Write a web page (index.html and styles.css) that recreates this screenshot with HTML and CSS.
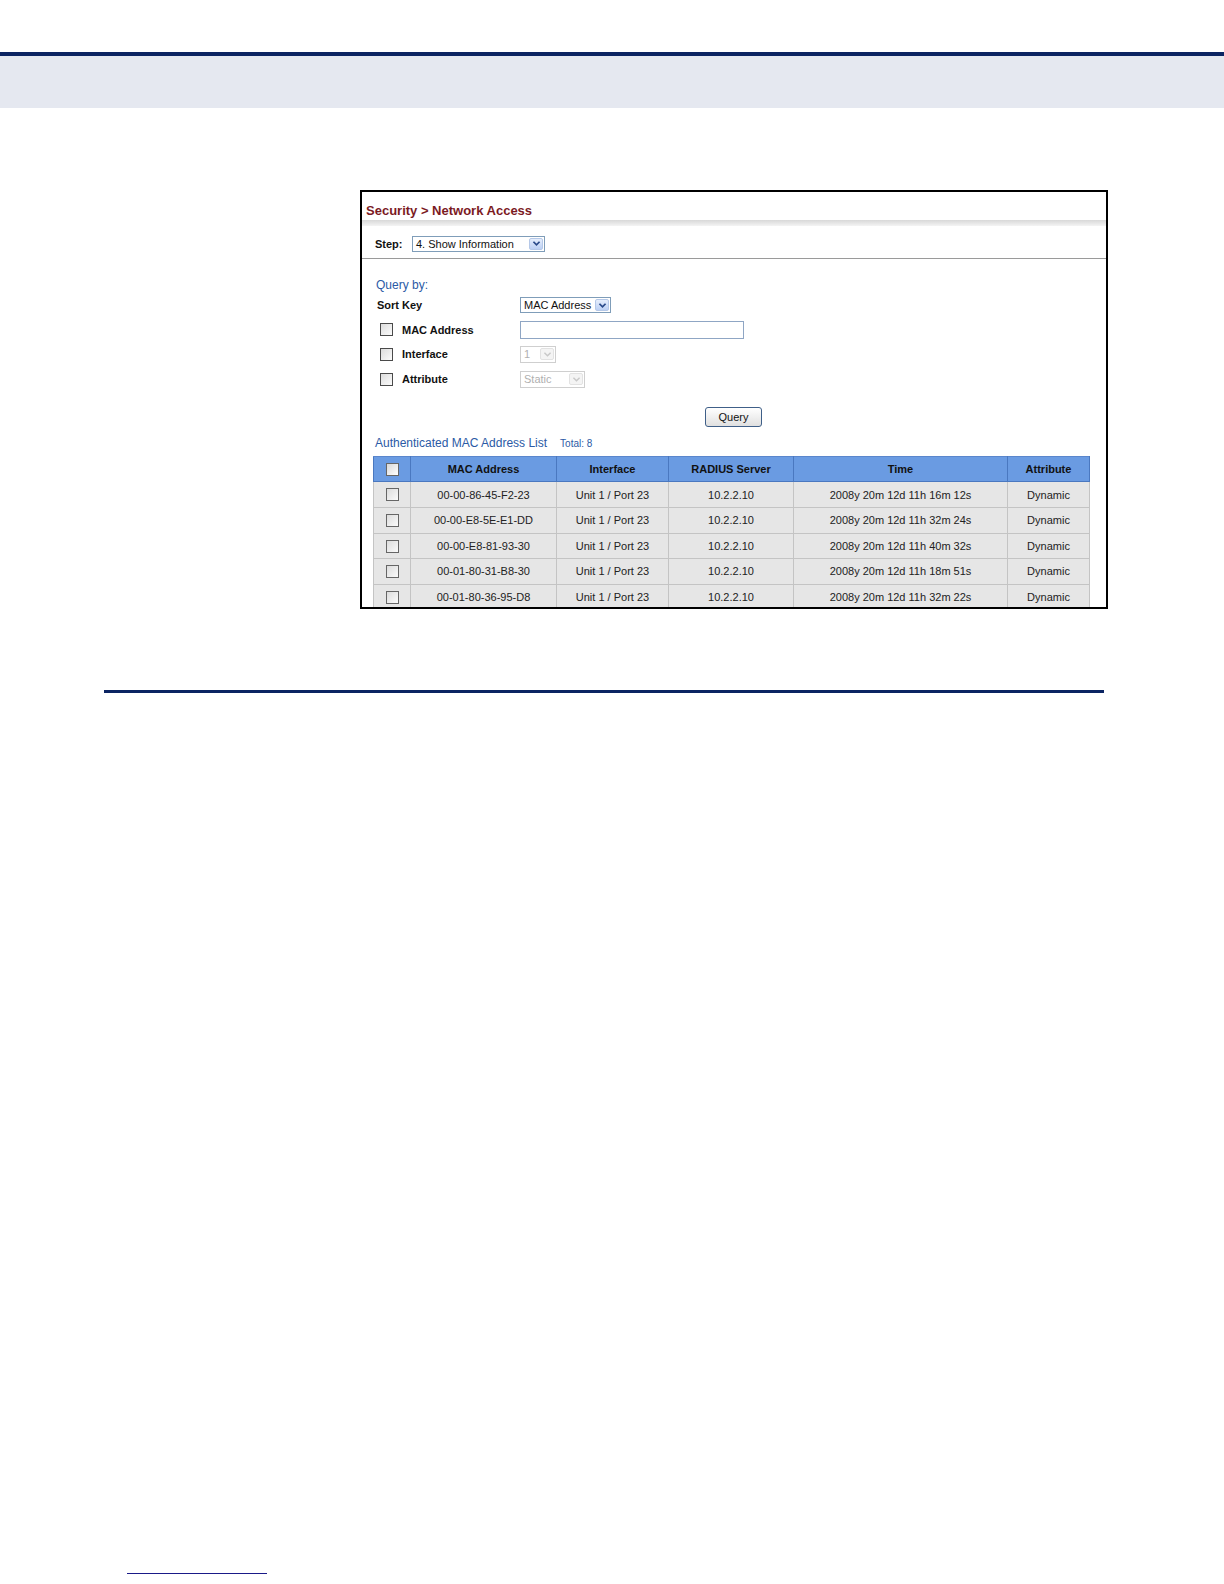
FILE: index.html
```html
<!DOCTYPE html>
<html>
<head>
<meta charset="utf-8">
<link rel="stylesheet" href="styles.css">
</head>
<body>
<div class="topspace"></div>
<div class="topline"></div>
<div class="topband"></div>

<div class="shot">
  <div class="title">Security &gt; Network Access</div>
  <div class="titleshade"></div>
  <div class="steprow">
    <span class="lbl">Step:</span>
    <span class="sel sel-step"><span class="seltext">4. Show Information</span><span class="arrow"><svg viewBox="0 0 10 8" width="9" height="7"><path d="M1.5 2 L5 5.5 L8.5 2" fill="none" stroke="#2a4a8a" stroke-width="2"/></svg></span></span>
  </div>
  <div class="steprule"></div>

  <div class="query">
    <div class="qtitle">Query by:</div>
    <div class="frow">
      <span class="flabel nocb">Sort Key</span>
      <span class="sel sel-sort"><span class="seltext">MAC Address</span><span class="arrow"><svg viewBox="0 0 10 8" width="9" height="7"><path d="M1.5 2 L5 5.5 L8.5 2" fill="none" stroke="#2a4a8a" stroke-width="2"/></svg></span></span>
    </div>
    <div class="frow">
      <span class="flabel"><span class="cb"></span>MAC Address</span>
      <span class="textin"></span>
    </div>
    <div class="frow">
      <span class="flabel"><span class="cb"></span>Interface</span>
      <span class="sel dis sel-if"><span class="seltext">1</span><span class="arrow"><svg viewBox="0 0 10 8" width="9" height="7"><path d="M1.5 2 L5 5.5 L8.5 2" fill="none" stroke="#c8c8c8" stroke-width="1.6"/></svg></span></span>
    </div>
    <div class="frow">
      <span class="flabel"><span class="cb"></span>Attribute</span>
      <span class="sel dis sel-attr"><span class="seltext">Static</span><span class="arrow"><svg viewBox="0 0 10 8" width="9" height="7"><path d="M1.5 2 L5 5.5 L8.5 2" fill="none" stroke="#c8c8c8" stroke-width="1.6"/></svg></span></span>
    </div>
    <div class="btnrow"><span class="btn">Query</span></div>
  </div>

  <div class="listhead"><span class="ltitle">Authenticated MAC Address List</span><span class="total">Total: 8</span></div>

  <table class="grid">
    <colgroup>
      <col class="c0"><col class="c1"><col class="c2"><col class="c3"><col class="c4"><col class="c5">
    </colgroup>
    <thead>
      <tr><th><span class="cb cbh"></span></th><th>MAC Address</th><th>Interface</th><th>RADIUS Server</th><th>Time</th><th>Attribute</th></tr>
    </thead>
    <tbody>
      <tr><td><span class="cb"></span></td><td>00-00-86-45-F2-23</td><td>Unit 1 / Port 23</td><td>10.2.2.10</td><td>2008y 20m 12d 11h 16m 12s</td><td>Dynamic</td></tr>
      <tr><td><span class="cb"></span></td><td>00-00-E8-5E-E1-DD</td><td>Unit 1 / Port 23</td><td>10.2.2.10</td><td>2008y 20m 12d 11h 32m 24s</td><td>Dynamic</td></tr>
      <tr><td><span class="cb"></span></td><td>00-00-E8-81-93-30</td><td>Unit 1 / Port 23</td><td>10.2.2.10</td><td>2008y 20m 12d 11h 40m 32s</td><td>Dynamic</td></tr>
      <tr><td><span class="cb"></span></td><td>00-01-80-31-B8-30</td><td>Unit 1 / Port 23</td><td>10.2.2.10</td><td>2008y 20m 12d 11h 18m 51s</td><td>Dynamic</td></tr>
      <tr><td><span class="cb"></span></td><td>00-01-80-36-95-D8</td><td>Unit 1 / Port 23</td><td>10.2.2.10</td><td>2008y 20m 12d 11h 32m 22s</td><td>Dynamic</td></tr>
    </tbody>
  </table>
</div>

<div class="rule"></div>
<div class="spacer"></div>
<div class="footline"></div>
</body>
</html>
```

FILE: styles.css
```css
html, body {
  margin: 0;
  padding: 0;
  background: #ffffff;
  font-family: "Liberation Sans", Arial, sans-serif;
}
.topspace { height: 52px; }
.topline { height: 4px; background: #0b2462; }
.topband { height: 52px; background: #e5e8f0; }

.shot {
  margin: 82px 0 0 360px;
  width: 744px;
  height: 415px;
  border: 2px solid #000;
  overflow: hidden;
  background: #fff;
  position: relative;
}
.title {
  padding: 11px 0 0 4px;
  height: 17px;
  font-size: 13px;
  font-weight: bold;
  color: #7b1a1f;
  line-height: 16px;
}
.titleshade {
  height: 6px;
  background: linear-gradient(#d8d8d8, #f4f4f4);
}
.steprow {
  display: flex;
  align-items: center;
  height: 21px;
  margin-top: 7px;
  padding-left: 13px;
}
.lbl {
  font-size: 11px;
  font-weight: bold;
  color: #111;
  width: 37px;
}
.sel {
  display: inline-flex;
  align-items: center;
  box-sizing: border-box;
  border: 1px solid #7f9db9;
  background: #fff;
  font-size: 11px;
  color: #111;
  height: 16px;
}
.seltext { flex: 1; padding-left: 3px; line-height: 14px; white-space: nowrap; }
.arrow {
  width: 14px;
  height: 12px;
  margin-right: 1px;
  box-sizing: border-box;
  border: 1px solid #b5c8e8;
  border-radius: 2px;
  background: linear-gradient(#e6eefc, #bcd0f4);
  display: flex;
  align-items: center;
  justify-content: center;
}
.sel-step { width: 133px; }
.sel-sort { width: 91px; }
.sel-if { width: 36px; }
.sel-attr { width: 65px; }
.sel.dis { border-color: #cfcfcf; color: #b0b0b0; height: 17px; }
.sel.dis .arrow { background: #f4f4f4; border-color: #e2e2e2; }

.steprule {
  height: 1px;
  background: #9a9a9a;
  margin-top: 4px;
}
.query { padding-left: 14px; }
.qtitle {
  font-size: 12px;
  color: #2b5aa5;
  margin-top: 18px;
  height: 16px;
  line-height: 16px;
}
.frow {
  display: flex;
  align-items: center;
  height: 24.6px;
}
.frow:first-of-type { margin-top: 2px; }
.flabel {
  width: 144px;
  display: flex;
  align-items: center;
  font-size: 11px;
  font-weight: bold;
  color: #111;
  padding-left: 4px;
  box-sizing: border-box;
}
.flabel.nocb { padding-left: 1px; }
.cb {
  display: inline-block;
  width: 11px;
  height: 11px;
  border: 1px solid #4a4a4a;
  background: linear-gradient(135deg, #dcdcdc, #fbfbfb);
  margin-right: 9px;
  flex: none;
}
.textin {
  display: inline-block;
  width: 224px;
  height: 18px;
  box-sizing: border-box;
  border: 1px solid #8fa6c4;
  background: #fff;
}
.btnrow {
  display: flex;
  padding-left: 329px;
  margin-top: 16px;
}
.btn {
  width: 57px;
  height: 20px;
  box-sizing: border-box;
  border: 1px solid #3f5f88;
  border-radius: 3px;
  background: linear-gradient(#ffffff, #e0e0e0);
  font-size: 11px;
  text-align: center;
  line-height: 18px;
  color: #111;
}
.listhead {
  padding-left: 13px;
  margin-top: 9px;
  display: flex;
  align-items: baseline;
  height: 16px;
}
.ltitle {
  font-size: 12px;
  color: #2b5aa5;
}
.total {
  font-size: 10px;
  color: #2b5aa5;
  margin-left: 13px;
}
.grid {
  margin: 4px 0 0 11px;
  border-collapse: collapse;
  width: 716px;
  table-layout: fixed;
  font-size: 11px;
}
.c0 { width: 37px; }
.c1 { width: 146px; }
.c2 { width: 112px; }
.c3 { width: 125px; }
.c4 { width: 214px; }
.c5 { width: 82px; }
.grid th {
  background: #6a9be2;
  height: 24px;
  border: 1px solid #4a78c0;
  border-top: 1px solid #5a86cc;
  font-weight: bold;
  color: #111;
  text-align: center;
  padding: 0;
}
.grid td {
  background: #e6e6e6;
  height: 24.6px;
  border: 1px solid #c4c4c4;
  border-top: 1px solid #f4f4f4;
  text-align: center;
  padding: 0;
  color: #222;
}
.grid .cb { margin: 0; vertical-align: middle; border-color: #666; }
.grid .cbh { background: linear-gradient(135deg, #d8d8d8, #fff); }

.rule {
  margin: 81px 0 0 104px;
  width: 1000px;
  height: 3px;
  background: #0b2462;
}
.spacer { height: 880px; }
.footline {
  margin-left: 127px;
  width: 140px;
  height: 1px;
  background: #1a1a88;
}
```
